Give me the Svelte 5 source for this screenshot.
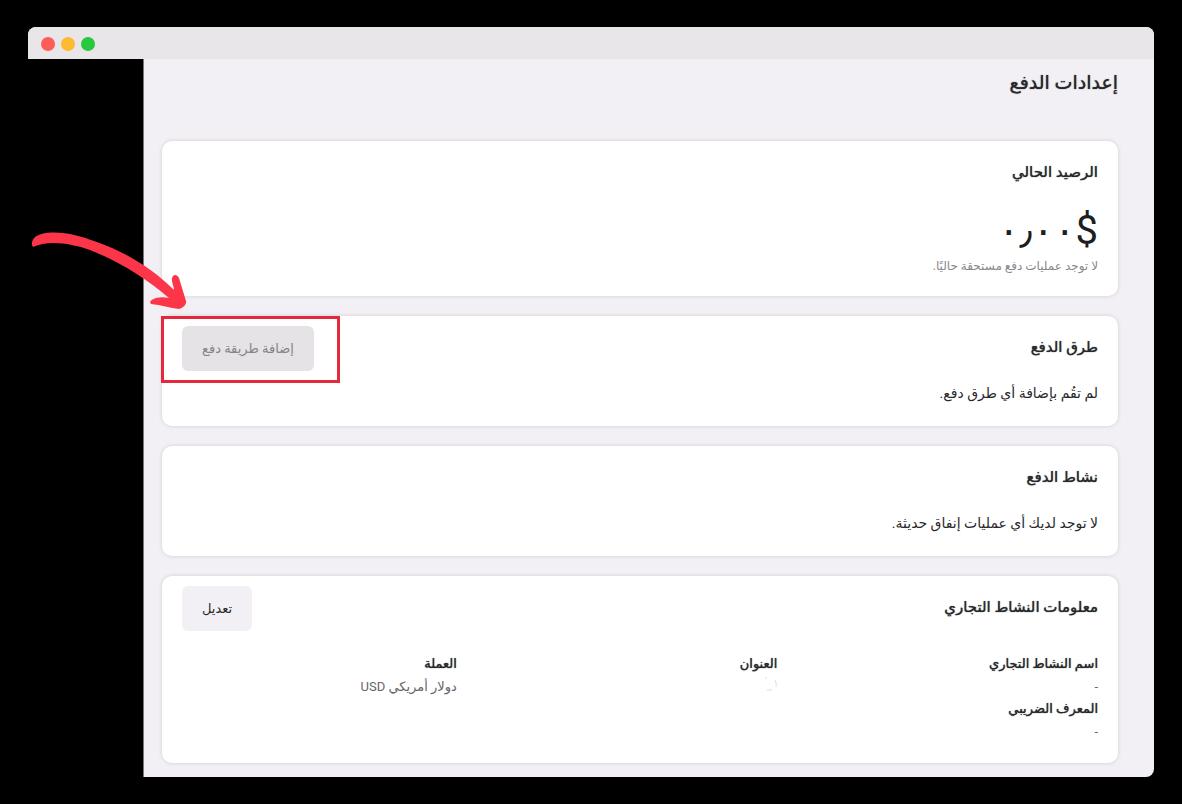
<script>
  const business = [
    [
      { label: "اسم النشاط التجاري", value: "-" },
      { label: "المعرف الضريبي", value: "-" },
    ],
    [{ label: "العنوان", value: "" }],
    [{ label: "العملة", value: "دولار أمريكي USD" }],
  ];
</script>

<div class="window" dir="rtl">
  <div class="titlebar">
    <span class="dot red"></span>
    <span class="dot yellow"></span>
    <span class="dot green"></span>
  </div>

  <div class="body">
    <main>
      <h1>إعدادات الدفع</h1>

      <section class="card">
        <h2>الرصيد الحالي</h2>
        <p class="amount">$٠٫٠٠</p>
        <p class="note">لا توجد عمليات دفع مستحقة حاليًا.</p>
      </section>

      <section class="card">
        <div class="card-head">
          <h2>طرق الدفع</h2>
          <button class="btn muted">إضافة طريقة دفع</button>
        </div>
        <p class="text">لم تقُم بإضافة أي طرق دفع.</p>
        <div class="highlight"></div>
        <svg class="arrow" viewBox="0 0 160 80" aria-hidden="true">
          <path
            d="M2 15C1 8 8 4 16 3C34 1 50 6 64 11C94 21 122 38 144 60C144 56 141 51 142 48C143 44 147 44 149 48L156 71C157 74 153 78 149 79C140 78 131 75 121 74C119 71 121 70 126 68C130 67 134 67 139 68C116 48 88 31 60 20C40 13 18 10 3 17Z"
          />
        </svg>
      </section>

      <section class="card">
        <h2>نشاط الدفع</h2>
        <p class="text">لا توجد لديك أي عمليات إنفاق حديثة.</p>
      </section>

      <section class="card">
        <div class="card-head">
          <h2>معلومات النشاط التجاري</h2>
          <button class="btn">تعديل</button>
        </div>
        <div class="info">
          {#each business as fields}
            <dl>
              {#each fields as field}
                <dt>{field.label}</dt>
                <dd>
                  {#if field.value}
                    {field.value}
                  {:else}
                    <svg class="trace" viewBox="0 0 14 14" aria-hidden="true">
                      <path d="M2 1h2M12 3q2 4 1 7M4 13h5" />
                    </svg>
                  {/if}
                </dd>
              {/each}
            </dl>
          {/each}
        </div>
      </section>
    </main>
    <aside></aside>
  </div>
</div>

<style>
  :global(body) {
    background: #000;
  }
  .window {
    margin: 27px 28px;
    border-radius: 8px 8px 8px 0;
    overflow: hidden;
    background: #f2f0f4;
    color: #28282c;
    font-family: Roboto, "DejaVu Sans", sans-serif;
  }
  .titlebar {
    direction: ltr;
    display: flex;
    align-items: center;
    gap: 6px;
    height: 32px;
    padding: 2px 13px 0;
    box-sizing: border-box;
    background: #e8e6e9;
  }
  .dot {
    width: 14px;
    height: 14px;
    border-radius: 50%;
  }
  .red {
    background: #ff5c57;
  }
  .yellow {
    background: #ffbb2f;
  }
  .green {
    background: #28c840;
  }
  .body {
    display: flex;
  }
  aside {
    flex: 0 0 115px;
    background: #000;
    border-right: 1px solid #77767a;
  }
  main {
    flex: 1;
    padding: 8px 36px 14px 18px;
  }
  h1,
  h2,
  p,
  dl,
  dd {
    margin: 0;
  }
  /* the bold cut is too wide for Arabic, thicken the regular one */
  h1,
  h2,
  dt {
    font-weight: 500;
    text-shadow: 0 0 1px currentColor;
  }
  h1 {
    margin-bottom: 42px;
    font-size: 19px;
    line-height: 32px;
  }
  .card {
    position: relative;
    margin-bottom: 20px;
    padding: 19px 20px 20px;
    border-radius: 10px;
    background: #fff;
    box-shadow: 0 0 4px rgba(0, 0, 0, 0.14);
  }
  .card:last-child {
    margin-bottom: 0;
  }
  .card-head {
    display: flex;
    justify-content: space-between;
    align-items: flex-start;
  }
  h2 {
    font-size: 15px;
    line-height: 24px;
  }
  .amount {
    margin-top: 25px;
    font-size: 40px;
    line-height: 44px;
    color: #1c1e21;
  }
  .note {
    margin-top: 3px;
    font-size: 12px;
    line-height: 20px;
    color: #88878b;
  }
  .text {
    margin-top: 22px;
    padding-bottom: 1px;
    font-size: 14px;
    line-height: 24px;
  }
  .btn {
    margin: -9px 0 -12px;
    padding: 0 20px;
    height: 45px;
    border: none;
    border-radius: 6px;
    background: #f2f0f4;
    color: #28282c;
    font-family: inherit;
    font-size: 13px;
  }
  .btn.muted {
    background: #e5e3e6;
    color: #858488;
  }
  .info {
    display: grid;
    grid-template-columns: 7fr 7fr 6fr;
    margin-top: 34px;
  }
  dt {
    font-size: 13px;
    line-height: 22px;
  }
  dd {
    font-size: 13px;
    line-height: 23px;
    color: #66656a;
  }
  .trace {
    width: 14px;
    height: 14px;
    fill: none;
    stroke: #dddce0;
  }
  .highlight {
    position: absolute;
    top: 0;
    left: -1px;
    width: 173px;
    height: 61px;
    border: 3px solid #e5283c;
  }
  .arrow {
    position: absolute;
    top: -86px;
    left: -132px;
    width: 160px;
    height: 80px;
    fill: #fd3549;
  }
</style>
